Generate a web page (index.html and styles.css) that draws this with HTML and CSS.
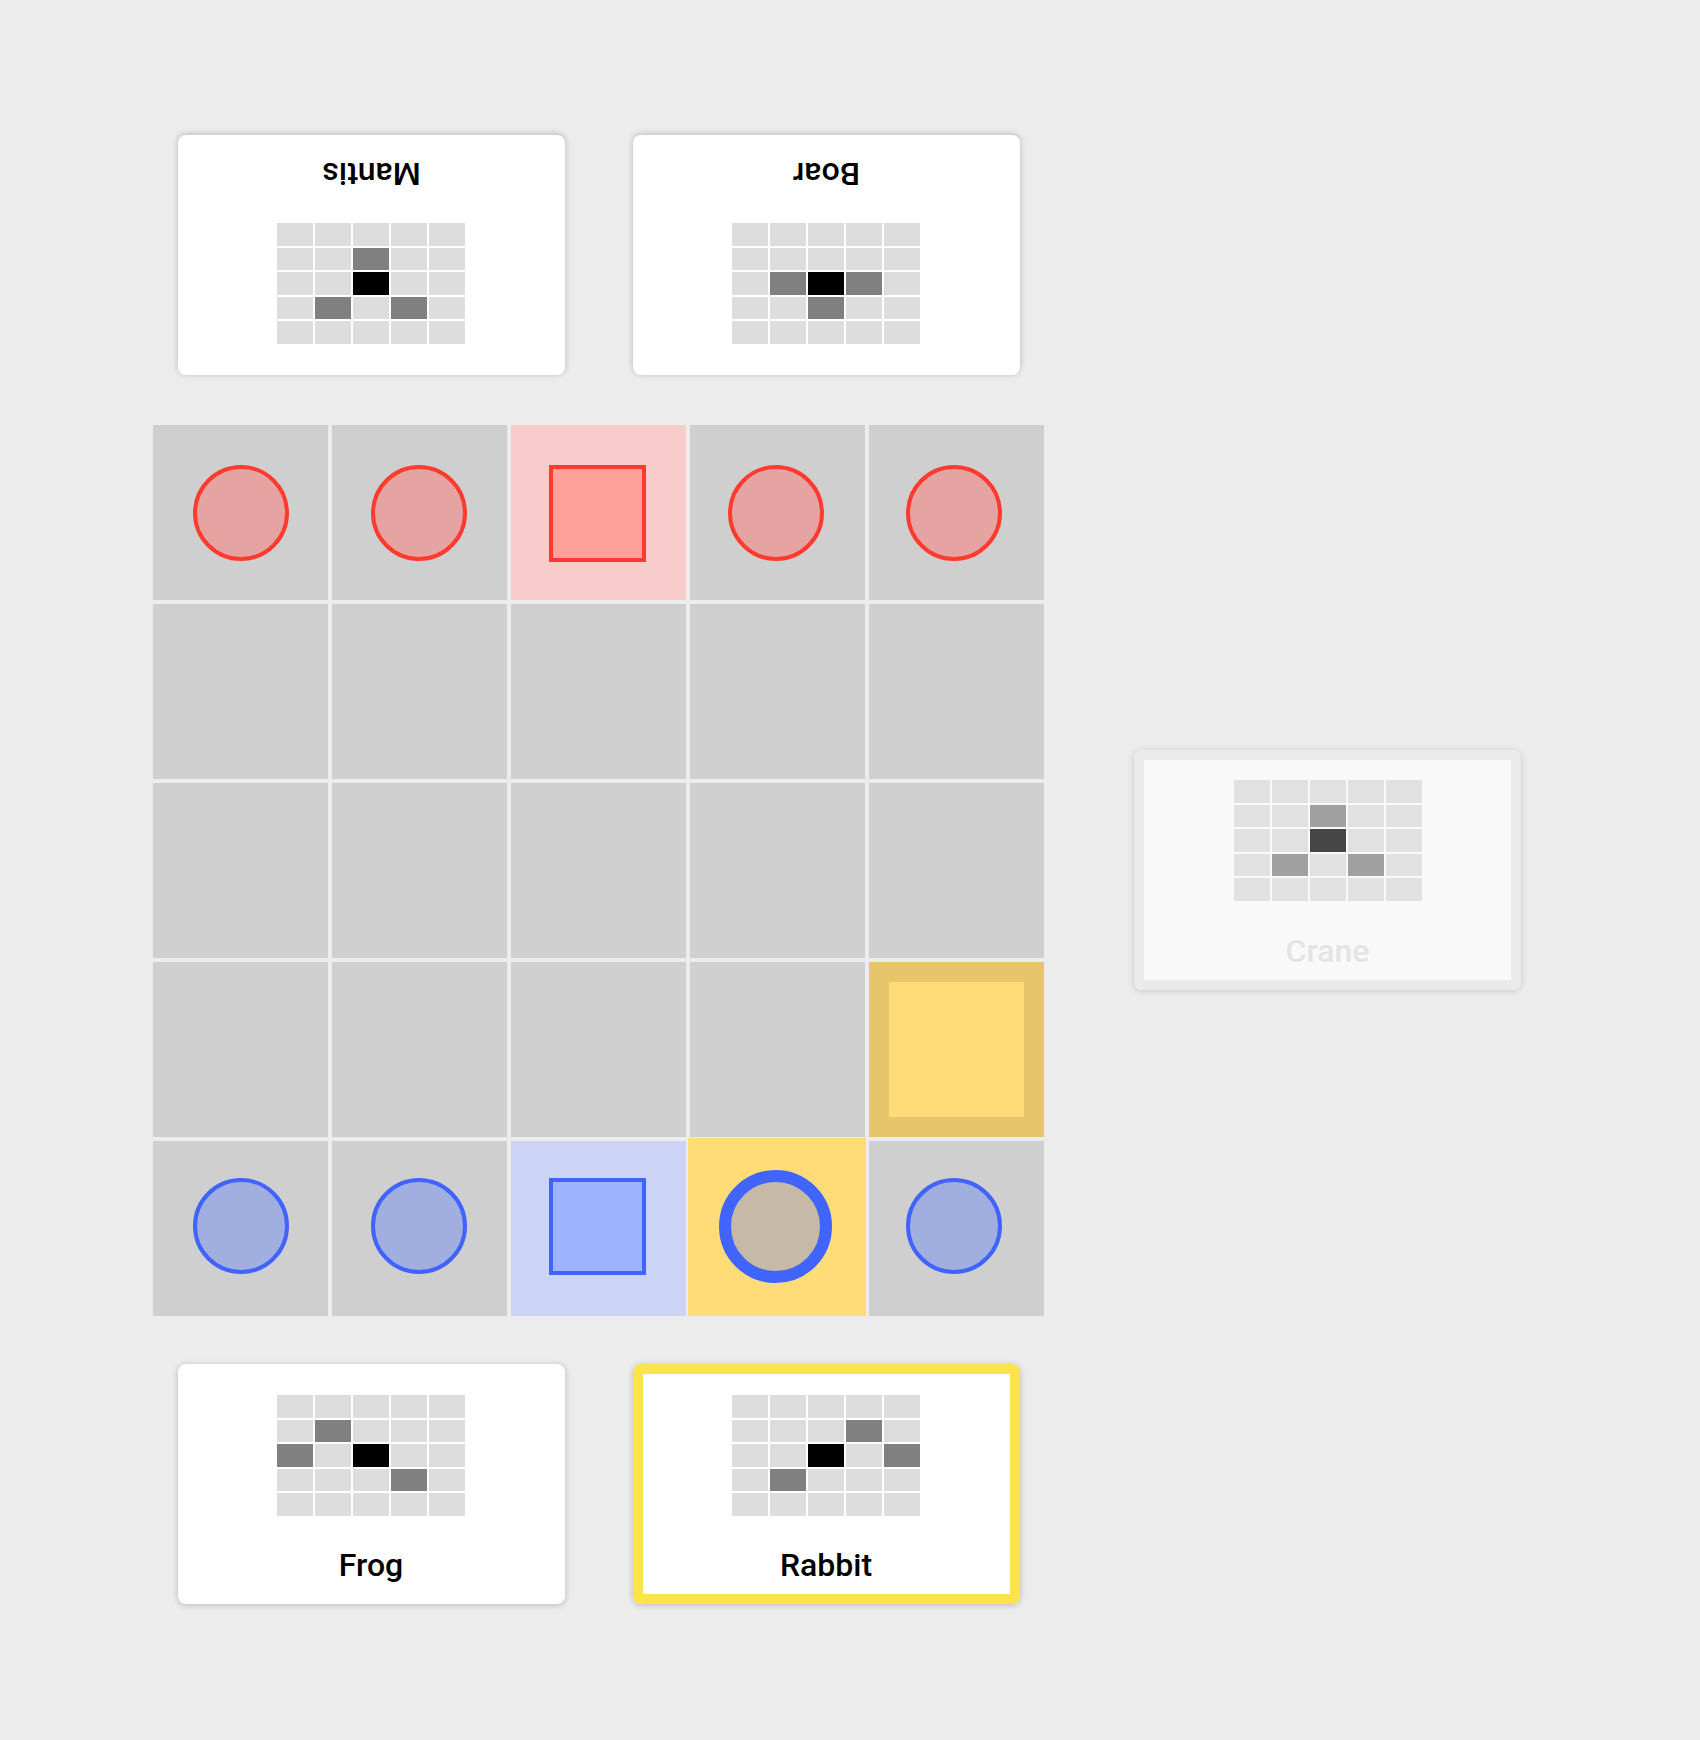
FILE: index.html
```html
<!DOCTYPE html>
<html lang="en">
<head>
<meta charset="utf-8">
<title>Onitama</title>
<link rel="stylesheet" href="styles.css">
</head>
<body>
<div class="page">
  <div class="column">
    <div class="hand">
      <div class="card flipped">
        <div class="mini">
          <i></i><i></i><i></i><i></i><i></i>
          <i></i><i class="m"></i><i></i><i class="m"></i><i></i>
          <i></i><i></i><i class="k"></i><i></i><i></i>
          <i></i><i></i><i class="m"></i><i></i><i></i>
          <i></i><i></i><i></i><i></i><i></i>
        </div>
        <div class="name">Mantis</div>
      </div>
      <div class="card flipped">
        <div class="mini">
          <i></i><i></i><i></i><i></i><i></i>
          <i></i><i></i><i class="m"></i><i></i><i></i>
          <i></i><i class="m"></i><i class="k"></i><i class="m"></i><i></i>
          <i></i><i></i><i></i><i></i><i></i>
          <i></i><i></i><i></i><i></i><i></i>
        </div>
        <div class="name">Boar</div>
      </div>
    </div>

    <div class="board">
      <div class="cells">
        <div class="cell"></div><div class="cell"></div><div class="cell temple-red"></div><div class="cell"></div><div class="cell"></div>
        <div class="cell"></div><div class="cell"></div><div class="cell"></div><div class="cell"></div><div class="cell"></div>
        <div class="cell"></div><div class="cell"></div><div class="cell"></div><div class="cell"></div><div class="cell"></div>
        <div class="cell"></div><div class="cell"></div><div class="cell"></div><div class="cell"></div>
        <div class="cell target"><span class="target-inner"></span></div>
        <div class="cell"></div><div class="cell"></div><div class="cell temple-blue"></div><div class="cell"></div><div class="cell"></div>
      </div>
      <div class="pieces">
        <div class="spot selected r5 c4"></div>

        <div class="spot r1 c1"><span class="pawn red"></span></div>
        <div class="spot r1 c2"><span class="pawn red"></span></div>
        <div class="spot r1 c3"><span class="master red"></span></div>
        <div class="spot r1 c4"><span class="pawn red"></span></div>
        <div class="spot r1 c5"><span class="pawn red"></span></div>

        <div class="spot r5 c1"><span class="pawn blue"></span></div>
        <div class="spot r5 c2"><span class="pawn blue"></span></div>
        <div class="spot r5 c3"><span class="master blue"></span></div>
        <div class="spot r5 c4"><span class="pawn picked"></span></div>
        <div class="spot r5 c5"><span class="pawn blue"></span></div>
      </div>
    </div>

    <div class="hand">
      <div class="card">
        <div class="mini">
          <i></i><i></i><i></i><i></i><i></i>
          <i></i><i class="m"></i><i></i><i></i><i></i>
          <i class="m"></i><i></i><i class="k"></i><i></i><i></i>
          <i></i><i></i><i></i><i class="m"></i><i></i>
          <i></i><i></i><i></i><i></i><i></i>
        </div>
        <div class="name">Frog</div>
      </div>
      <div class="card active">
        <div class="mini">
          <i></i><i></i><i></i><i></i><i></i>
          <i></i><i></i><i></i><i class="m"></i><i></i>
          <i></i><i></i><i class="k"></i><i></i><i class="m"></i>
          <i></i><i class="m"></i><i></i><i></i><i></i>
          <i></i><i></i><i></i><i></i><i></i>
        </div>
        <div class="name">Rabbit</div>
      </div>
    </div>
  </div>

  <div class="side">
    <div class="card spare">
      <div class="mini">
        <i></i><i></i><i></i><i></i><i></i>
        <i></i><i></i><i class="m"></i><i></i><i></i>
        <i></i><i></i><i class="k"></i><i></i><i></i>
        <i></i><i class="m"></i><i></i><i class="m"></i><i></i>
        <i></i><i></i><i></i><i></i><i></i>
      </div>
      <div class="name">Crane</div>
    </div>
  </div>
</div>
</body>
</html>
```

FILE: styles.css
```css
* { box-sizing: border-box; }

html, body {
  margin: 0;
  padding: 0;
  background: #ececec;
  font-family: Roboto, "Liberation Sans", sans-serif;
}

.page {
  display: flex;
  align-items: flex-start;
  padding: 135px 0 0 153px;
  height: 1740px;
}

.column {
  width: 891px;
  display: flex;
  flex-direction: column;
  align-items: center;
}

.hand {
  display: flex;
  justify-content: center;
  gap: 68px;
}

.card {
  width: 387px;
  height: 240px;
  background: #ffffff;
  border-radius: 8px;
  box-shadow: 0 1px 6px rgba(0, 0, 0, 0.22);
  display: flex;
  flex-direction: column;
  align-items: center;
  padding-top: 31px;
}

.card.flipped {
  transform: rotate(180deg);
}

.card.active {
  box-shadow: inset 0 0 0 10px #fce34b, 0 1px 6px rgba(0, 0, 0, 0.22);
}

.mini {
  width: 188px;
  height: 121px;
  display: grid;
  grid-template-columns: repeat(5, 1fr);
  grid-template-rows: repeat(5, 1fr);
  gap: 2px;
}

.mini i {
  background: #dddddd;
}

.mini i.m { background: #808080; }
.mini i.k { background: #000000; }

.name {
  margin-top: 30.5px;
  font-size: 32px;
  font-weight: 500;
  color: #000;
  line-height: 1.172;
}

.board {
  position: relative;
  margin: 50px 0 48px;
  width: 891px;
  height: 891px;
}

.cells {
  display: grid;
  grid-template-columns: repeat(5, 175px);
  grid-template-rows: repeat(5, 175px);
  gap: 4px;
}

.cell {
  background: #cfcfcf;
  display: flex;
  align-items: center;
  justify-content: center;
}

.cell.temple-red { background: #f8cccb; }
.cell.temple-blue { background: #cbd4f4; }

.cell.target {
  background: #e6c56b;
}

.target-inner {
  width: 135px;
  height: 135px;
  background: #ffdc78;
}

/* piece layer over the board: 5 equal squares of 891/5 */
.pieces {
  position: absolute;
  inset: 0;
  display: grid;
  grid-template-columns: repeat(5, 1fr);
  grid-template-rows: repeat(5, 1fr);
}

.spot {
  display: flex;
  align-items: center;
  justify-content: center;
  padding: 0 1.6px 1.6px 0;
}

.r1 { grid-row: 1; }
.r5 { grid-row: 5; }
.c1 { grid-column: 1; }
.c2 { grid-column: 2; }
.c3 { grid-column: 3; }
.c4 { grid-column: 4; }
.c5 { grid-column: 5; }

.spot.selected {
  background: #ffdc78;
}

.pawn {
  width: 96px;
  height: 96px;
  border-radius: 50%;
  border: 4px solid;
}

.pawn.red {
  background: #e5a4a2;
  border-color: #ff3b30;
}

.pawn.blue {
  background: #a1afe0;
  border-color: #4163ff;
}

.pawn.picked {
  width: 113px;
  height: 113px;
  border: 12px solid #4065ff;
  background: #c6b9a8;
}

.master {
  width: 97px;
  height: 97px;
  border: 4px solid;
}

.master.red {
  background: #ffa19b;
  border-color: #ff3b30;
}

.master.blue {
  background: #9fb2ff;
  border-color: #4163ff;
}

.side {
  margin-left: 90px;
  margin-top: 615px;
}

.card.spare {
  opacity: 0.7;
  box-shadow: inset 0 0 0 10px #eaeaea, 0 1px 6px rgba(0, 0, 0, 0.22);
  padding-top: 30px;
}

.card.spare .name {
  color: #e2e2e2;
  margin-top: 32px;
}
```
